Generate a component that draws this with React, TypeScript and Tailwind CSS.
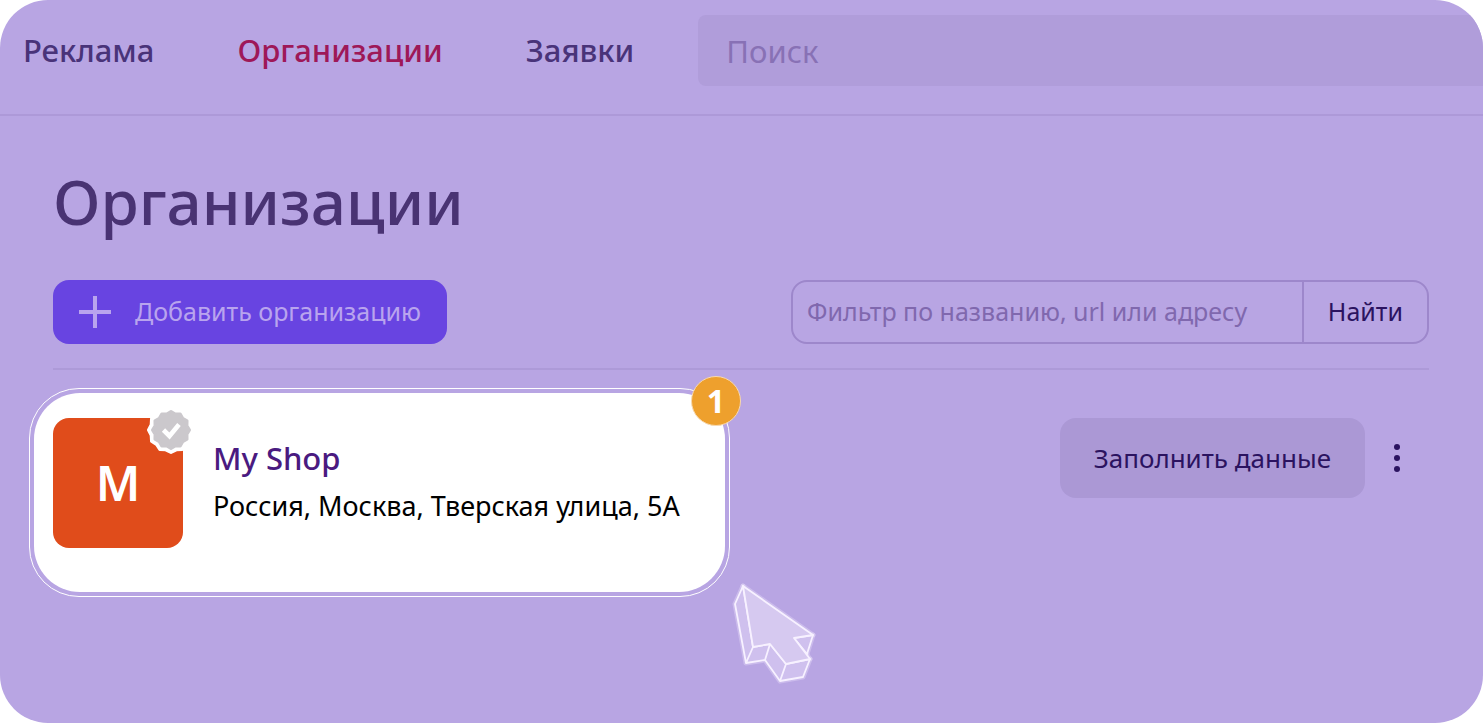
import React from 'react';

const navItems = [
  { label: 'Реклама', href: '#ads', active: false },
  { label: 'Организации', href: '#organizations', active: true },
  { label: 'Заявки', href: '#leads', active: false },
];

function sealPath(cx: number, cy: number, outer: number, inner: number, teeth: number) {
  const points: string[] = [];
  for (let i = 0; i < teeth * 2; i++) {
    const radius = i % 2 === 0 ? outer : inner;
    const angle = (Math.PI * i) / teeth - Math.PI / 2;
    points.push(`${(cx + radius * Math.cos(angle)).toFixed(2)} ${(cy + radius * Math.sin(angle)).toFixed(2)}`);
  }
  return `M${points.join('L')}Z`;
}

function VerifiedSeal() {
  return (
    <svg viewBox="0 0 48 48" className="absolute -right-3 -top-3 size-12" aria-hidden="true">
      <path d={sealPath(24, 24, 22.5, 20.5, 12)} fill="#fff" stroke="#fff" strokeWidth="3" strokeLinejoin="round" />
      <path d={sealPath(24, 24, 18.5, 16.5, 12)} fill="#cbc8cc" stroke="#cbc8cc" strokeWidth="3" strokeLinejoin="round" />
      <path d="M16.5 24l6 6 9.5-11.5" fill="none" stroke="#fff" strokeWidth="4.6" />
    </svg>
  );
}

const pointerSides =
  'M23 16L15 34L26 93L33 77ZM26 93L45 90L50 74L33 77ZM45 90L60 111L66 94L50 74ZM60 111L83 107L90 89L66 94ZM74 68L93 65L87 84Z';
const pointerFace = 'M23 16L93 65L74 68L90 89L66 94L50 74L33 77Z';

function Pointer() {
  return (
    <svg
      viewBox="0 0 110 120"
      className="pointer-events-none absolute left-[691px] top-[200px] h-[120px] w-[110px]"
      fill="none"
      strokeLinejoin="round"
      aria-hidden="true"
    >
      <g stroke="#efe6fd" strokeOpacity="0.35" strokeWidth="5">
        <path d={pointerSides} />
        <path d={pointerFace} />
      </g>
      <g stroke="#f7f1ff" strokeWidth="1.8">
        <path d={pointerSides} fill="#cfc0ee" />
        <path d={pointerFace} fill="#d6c9f0" />
      </g>
    </svg>
  );
}

function Header() {
  return (
    <header className="flex items-start border-b-2 border-[#ad99d8] pb-7 pl-[23px] pt-[15px]">
      <nav className="flex h-[71px] shrink-0 items-center gap-[83px] text-[31px] font-medium text-[#493379]">
        {navItems.map((item) => (
          <a key={item.label} href={item.href} className={item.active ? 'text-[#9e1858]' : ''}>
            {item.label}
          </a>
        ))}
      </nav>
      <input
        type="search"
        aria-label="Поиск"
        placeholder="Поиск"
        className="ml-16 h-[71px] min-w-0 grow rounded-l-lg bg-[#b09dda] px-7 text-[31px] text-[#493379] outline-none placeholder:text-[#8871b5]"
      />
    </header>
  );
}

function Toolbar() {
  return (
    <div className="flex items-center justify-between border-b-2 border-[#ad9ad8] pb-6">
      <button type="button" className="flex h-16 items-center gap-6 rounded-2xl bg-[#6844e1] px-[26px] text-[25px] text-[#b9a4ee]">
        <svg viewBox="0 0 32 32" className="size-8" stroke="currentColor" strokeWidth="4" aria-hidden="true">
          <path d="M16 0v32M0 16h32" />
        </svg>
        Добавить организацию
      </button>
      <form className="flex h-16 w-[638px] overflow-hidden rounded-2xl border-2 border-[#9d87cb] text-[25px]" onSubmit={(e) => e.preventDefault()}>
        <input
          type="text"
          aria-label="Фильтр по названию, url или адресу"
          placeholder="Фильтр по названию, url или адресу"
          className="min-w-0 grow bg-transparent px-[14px] text-[#2b1360] outline-none placeholder:text-[#8068ae]"
        />
        <button type="submit" className="border-l-2 border-[#9d87cb] px-6 text-[#2b1360]">
          Найти
        </button>
      </form>
    </div>
  );
}

function OrganizationRow() {
  return (
    <div className="relative -ml-6 flex items-start justify-between pt-[18px]">
      <article className="relative w-[701px] rounded-[50px] border border-white p-1">
        <div className="flex gap-[30px] rounded-[46px] bg-white pb-11 pl-[19px] pr-4 pt-[25px]">
          <div className="relative flex size-[130px] shrink-0 items-center justify-center rounded-2xl bg-[#e04c1b] text-[48px] font-semibold text-white">
            M
            <VerifiedSeal />
          </div>
          <div className="pt-5">
            <h2 className="text-[31px] font-medium leading-[40px] text-[#4a1a80]">My Shop</h2>
            <p className="mt-[6px] whitespace-nowrap text-[27px] leading-[44px] text-black">Россия, Москва, Тверская улица, 5А</p>
          </div>
        </div>
        <span className="absolute -right-3 -top-[13px] flex size-[50px] items-center justify-center rounded-full border border-[#f7d9b0] bg-[#eea02d] text-[32px] font-bold text-white">
          1
        </span>
      </article>
      <div className="flex items-center pt-[30px]">
        <button type="button" className="h-20 rounded-2xl bg-[#ab98d5] px-[34px] text-[26px] text-[#2b1360]">
          Заполнить данные
        </button>
        <button type="button" aria-label="Ещё" className="flex h-20 items-center justify-center px-[29px] text-[#2b1360]">
          <svg viewBox="0 0 6 28" className="h-7 w-[6px]" fill="currentColor" aria-hidden="true">
            <circle cx="3" cy="3" r="3" />
            <circle cx="3" cy="14" r="3" />
            <circle cx="3" cy="25" r="3" />
          </svg>
        </button>
      </div>
      <Pointer />
    </div>
  );
}

export default function App() {
  return (
    <div className="min-h-screen overflow-hidden rounded-[48px] bg-[#b8a5e3] font-['Noto_Sans',sans-serif]">
      <Header />
      <main className="pl-[53px] pr-[54px]">
        <h1 className="pb-[39px] pt-[45px] text-[62px] font-medium leading-[80px] text-[#493373]">Организации</h1>
        <Toolbar />
        <OrganizationRow />
      </main>
    </div>
  );
}
